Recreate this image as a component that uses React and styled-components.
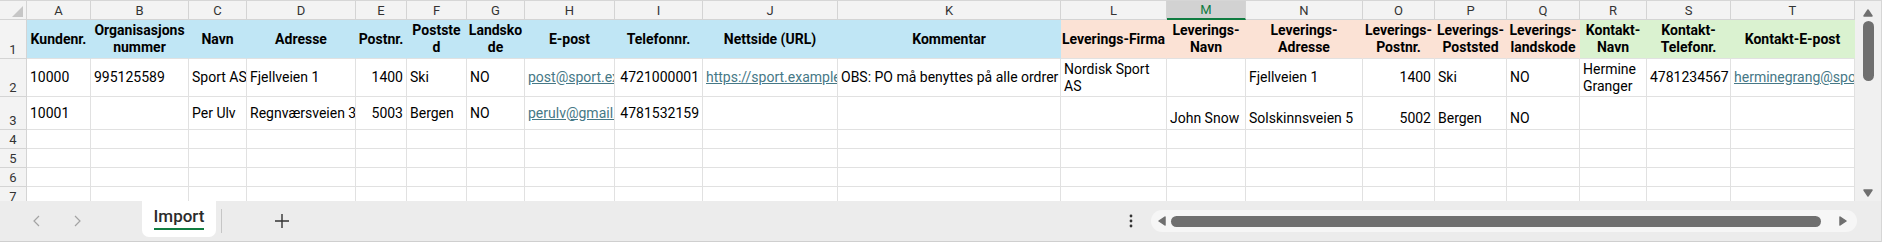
import styled, { createGlobalStyle } from "styled-components";

const Global = createGlobalStyle`
  * { box-sizing: border-box; }
  body { margin: 0; font-family: Roboto, "Noto Sans", sans-serif; background: #fff; }
`;

const fills = { blue: "#c0e6f5", peach: "#fbe2d5", green: "#daf2d0" };

const columns = [
  ["A", 64], ["B", 98], ["C", 58], ["D", 109], ["E", 51], ["F", 60], ["G", 58],
  ["H", 90], ["I", 88], ["J", 135], ["K", 223], ["L", 106], ["M", 79], ["N", 117],
  ["O", 72], ["P", 72], ["Q", 73], ["R", 67], ["S", 84], ["T", 124],
];

const headers = [
  ["blue", ["Kundenr."]], ["blue", ["Organisasjons", "nummer"]], ["blue", ["Navn"]],
  ["blue", ["Adresse"]], ["blue", ["Postnr."]], ["blue", ["Postste", "d"]],
  ["blue", ["Landsko", "de"]], ["blue", ["E-post"]], ["blue", ["Telefonnr."]],
  ["blue", ["Nettside (URL)"]], ["blue", ["Kommentar"]],
  ["peach", ["Leverings-Firma"]], ["peach", ["Leverings-", "Navn"]],
  ["peach", ["Leverings-", "Adresse"]], ["peach", ["Leverings-", "Postnr."]],
  ["peach", ["Leverings-", "Poststed"]], ["peach", ["Leverings-", "landskode"]],
  ["green", ["Kontakt-", "Navn"]], ["green", ["Kontakt-", "Telefonr."]],
  ["green", ["Kontakt-E-post"]],
];

// [text lines, align, link, valign]
const rows = [
  {
    n: 1,
    cells: [
      [["10000"]], [["995125589"]], [["Sport AS"]], [["Fjellveien 1"]], [["1400"], "right"],
      [["Ski"]], [["NO"]], [["post@sport.example.no"], "left", true],
      [["4721000001"], "right"], [["https://sport.example.no"], "left", true],
      [["OBS: PO må benyttes på alle ordrer"]], [["Nordisk Sport", "AS"]], [[]],
      [["Fjellveien 1"]], [["1400"], "right"], [["Ski"]], [["NO"]],
      [["Hermine", "Granger"]], [["4781234567"]], [["herminegrang@sport.example.no"], "left", true],
    ],
  },
  {
    n: 2,
    cells: [
      [["10001"]], [[]], [["Per Ulv"]], [["Regnværsveien 3"]], [["5003"], "right"],
      [["Bergen"]], [["NO"]], [["perulv@gmail.com"], "left", true],
      [["4781532159"], "right"], [[]], [[]], [[]],
      [["John Snow"], "left", false, "end"], [["Solskinnsveien 5"], "left", false, "end"],
      [["5002"], "right", false, "end"], [["Bergen"], "left", false, "end"],
      [["NO"], "left", false, "end"], [[]], [[]], [[]],
    ],
  },
];

const Page = styled.div`
  width: 1882px;
  height: 242px;
  display: flex;
  flex-direction: column;
  overflow: hidden;
  border-top: 1px solid #d6d6d6;
  border-right: 1px solid #d6d6d6;
`;

const SheetArea = styled.div`
  height: 200px;
  display: flex;
  overflow: hidden;
`;

const Grid = styled.div`
  display: grid;
  grid-template-columns: ${(p) => p.$cols};
  grid-template-rows: 19px 39px 38px 33px 19px 19px 19px 19px;
  width: 1855px;
  flex: none;
  align-content: start;
`;

const Corner = styled.div`
  background: #f3f3f3;
  border-right: 1px solid #d4d4d4;
  border-bottom: 1px solid #d4d4d4;
  position: relative;
  &::after {
    content: "";
    position: absolute;
    right: 3px;
    bottom: 2px;
    border-style: solid;
    border-width: 0 0 11px 11px;
    border-color: transparent transparent #c6c6c6 transparent;
  }
`;

const ColHead = styled.div`
  background: ${(p) => (p.$sel ? "#d2d2d2" : "#f3f3f3")};
  color: ${(p) => (p.$sel ? "#107c41" : "#333")};
  border-right: 1px solid #d4d4d4;
  border-bottom: ${(p) => (p.$sel ? "2px solid #107c41" : "1px solid #d4d4d4")};
  font-size: 13px;
  display: flex;
  align-items: center;
  justify-content: center;
`;

const RowHead = styled.div`
  background: #f3f3f3;
  color: #333;
  border-right: 1px solid #d4d4d4;
  border-bottom: 1px solid #d4d4d4;
  font-size: 13px;
  display: flex;
  align-items: flex-end;
  justify-content: center;
  padding-bottom: 1px;
`;

const Cell = styled.div`
  display: flex;
  align-items: ${(p) => (p.$v === "end" ? "flex-end" : "center")};
  justify-content: ${(p) =>
    p.$h === "right" ? "flex-end" : p.$h === "center" ? "center" : "flex-start"};
  padding: 0 3px ${(p) => (p.$v === "end" ? "2px" : "0")};
  overflow: hidden;
  white-space: nowrap;
  background: ${(p) => fills[p.$fill] || "#fff"};
  border-right: 1px solid ${(p) => fills[p.$fill] || "#e1e1e1"};
  border-bottom: 1px solid #e1e1e1;
  font-size: 14px;
  line-height: 17px;
  font-weight: ${(p) => (p.$bold ? 700 : 400)};
  color: #000;
`;

const Lines = styled.div`
  text-align: ${(p) => p.$h || "left"};
`;

const Link = styled.span`
  color: #467886;
  text-decoration: underline;
`;

const VScroll = styled.div`
  flex: 1;
  background: #f0f0f0;
  display: flex;
  flex-direction: column;
  align-items: center;
  padding: 6px 0 4px;
`;

const Thumb = styled.div`
  width: 11px;
  border-radius: 6px;
  background: #6f6f6f;
`;

const VThumb = styled(Thumb)`
  height: 60px;
  margin-top: 4px;
`;

const Spacer = styled.div`
  flex: 1;
`;

const TabBar = styled.div`
  flex: 1;
  background: #ececec;
  border-bottom: 1px solid #cfcfcf;
  display: flex;
  align-items: center;
  padding-left: 30px;
`;

const NavBtn = styled.div`
  width: 14px;
  display: flex;
  justify-content: center;
  margin-right: ${(p) => p.$gap || 0}px;
`;

const Tab = styled.div`
  align-self: flex-start;
  margin-left: 58px;
  width: 74px;
  height: 36px;
  background: #fff;
  border-radius: 0 0 7px 7px;
  display: flex;
  align-items: center;
  justify-content: center;
  padding-bottom: 2px;
`;

const TabLabel = styled.span`
  font-size: 17px;
  font-weight: 500;
  color: #2b2b2b;
  border-bottom: 2px solid #107c41;
  padding-bottom: 2px;
  line-height: 20px;
`;

const Sep = styled.div`
  width: 1px;
  height: 24px;
  background: #c6c6c6;
  margin-left: 5px;
  margin-right: 53px;
`;

const Dots = styled.div`
  width: 4px;
  margin-right: 18px;
  display: flex;
  justify-content: center;
`;

const HTrack = styled.div`
  width: 706px;
  height: 22px;
  margin-right: 24px;
  border-radius: 11px;
  background: #f6f6f6;
  display: flex;
  align-items: center;
  padding: 0 9px 0 6px;
  gap: 4px;
`;

const HThumb = styled(Thumb)`
  width: 650px;
  height: 11px;
`;

const Tri = ({ dir }) => {
  const pts = {
    up: "1,9 5,3 9,9",
    down: "1,3 5,9 9,3",
    left: "8,1 2,5 8,9",
    right: "2,1 8,5 2,9",
  }[dir];
  return (
    <svg width="10" height="10" viewBox="0 0 10 10">
      <polygon points={pts} fill="#6f6f6f" strokeLinejoin="round" stroke="#6f6f6f" strokeWidth="1.5" />
    </svg>
  );
};

const Chevron = ({ right }) => (
  <svg width="10" height="16" viewBox="0 0 10 16">
    <path d={right ? "M3 3 L8 8 L3 13" : "M7 3 L2 8 L7 13"} fill="none" stroke="#a3a3a3" strokeWidth="1.2" />
  </svg>
);

const renderLines = (lines, h, link) => (
  <Lines $h={h}>
    {lines.map((l, i) => (
      <div key={i}>{link ? <Link>{l}</Link> : l}</div>
    ))}
  </Lines>
);

export default function App() {
  const template = "27px " + columns.map((c) => c[1] + "px").join(" ");
  return (
    <>
      <Global />
      <Page>
        <SheetArea>
          <Grid $cols={template}>
            <Corner />
            {columns.map(([k]) => (
              <ColHead key={k} $sel={k === "M"}>{k}</ColHead>
            ))}
            <RowHead>1</RowHead>
            {headers.map(([fill, lines], i) => (
              <Cell key={i} $fill={fill} $bold $h="center">
                {renderLines(lines, "center")}
              </Cell>
            ))}
            {rows.map((r) => [
              <RowHead key={"h" + r.n}>{r.n + 1}</RowHead>,
              ...r.cells.map(([lines, h, link, v], i) => (
                <Cell key={r.n + "-" + i} $h={h} $v={v}>
                  {renderLines(lines, h, link)}
                </Cell>
              )),
            ])}
            {[4, 5, 6, 7].map((n) => [
              <RowHead key={"h" + n}>{n}</RowHead>,
              ...columns.map(([k]) => <Cell key={n + k} />),
            ])}
          </Grid>
          <VScroll>
            <Tri dir="up" />
            <VThumb />
            <Spacer />
            <Tri dir="down" />
          </VScroll>
        </SheetArea>
        <TabBar>
          <NavBtn $gap={26}><Chevron /></NavBtn>
          <NavBtn><Chevron right /></NavBtn>
          <Tab><TabLabel>Import</TabLabel></Tab>
          <Sep />
          <svg width="14" height="14" viewBox="0 0 14 14">
            <path d="M7 0 V14 M0 7 H14" stroke="#333" strokeWidth="1.4" />
          </svg>
          <Spacer />
          <Dots>
            <svg width="4" height="14" viewBox="0 0 4 14">
              <circle cx="2" cy="2" r="1.4" fill="#333" />
              <circle cx="2" cy="7" r="1.4" fill="#333" />
              <circle cx="2" cy="12" r="1.4" fill="#333" />
            </svg>
          </Dots>
          <HTrack>
            <Tri dir="left" />
            <HThumb />
            <Spacer />
            <Tri dir="right" />
          </HTrack>
        </TabBar>
      </Page>
    </>
  );
}
